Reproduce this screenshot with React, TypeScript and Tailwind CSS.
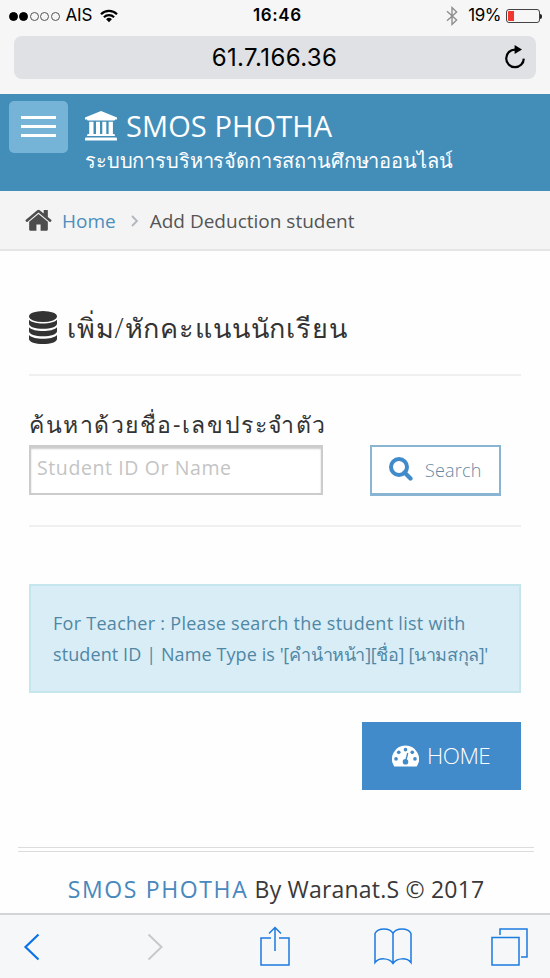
import React from 'react';

interface IconProps {
  className?: string;
}

const WifiIcon: React.FC<IconProps> = ({ className }) => (
  <svg className={className} viewBox="0 0 18 14" fill="none" stroke="#000" strokeWidth="2.2">
    <path d="M1 5.2a11.4 11.4 0 0 1 16 0" />
    <path d="M3.9 8.2a7.3 7.3 0 0 1 10.2 0" />
    <path d="M9 13.2 6.1 10.3a4.1 4.1 0 0 1 5.8 0z" fill="#000" stroke="none" />
  </svg>
);

const BluetoothIcon: React.FC<IconProps> = ({ className }) => (
  <svg className={className} viewBox="0 0 12 20" fill="none" stroke="#8e8e8e" strokeWidth="1.4">
    <path d="M1 5.3 10.6 14 6 18.4V1.6L10.6 6 1 14.7" />
  </svg>
);

const ReloadIcon: React.FC<IconProps> = ({ className }) => (
  <svg className={className} viewBox="0 0 22 24" fill="none" stroke="#000" strokeWidth="2.2">
    <path d="M11 4.6a8.8 8.8 0 1 0 8.8 9" />
    <path d="M10.6 0 18 4.6 10.6 9z" fill="#000" stroke="none" />
  </svg>
);

const InstitutionIcon: React.FC<IconProps> = ({ className }) => (
  <svg className={className} viewBox="0 0 32 30" fill="#fff">
    <path d="M16 0 32 6.5V8.6H30a1 1 0 0 1-1 1H3a1 1 0 0 1-1-1H0V6.5z" />
    <path d="M4.2 10.7h4.3v13H4.2zM11 10.7h4v13h-4zM17.3 10.7h4v13h-4zM23.6 10.7h4.3v13h-4.3z" />
    <path d="M3.2 23h25.6a1.2 1.2 0 0 1 1.1 1.1v1H2.1v-1A1.2 1.2 0 0 1 3.2 23z" />
    <path d="M1.1 26.4h29.8A1.2 1.2 0 0 1 32 27.5V29.6H0v-2.1a1.2 1.2 0 0 1 1.1-1.1z" />
  </svg>
);

const HouseIcon: React.FC<IconProps> = ({ className }) => (
  <svg className={className} viewBox="0 0 1664 1312" fill="#4d4d4d">
    <path d="M1408 768v480q0 26-19 45t-45 19H960V928H704v384H320q-26 0-45-19t-19-45V768q0-1 .5-3t.5-3l575-474 575 474q1 2 1 6zm223-69-62 74q-8 9-21 11h-3q-13 0-21-7L832 200 140 777q-12 8-24 7-13-2-21-11l-62-74q-8-10-7-23.500t11-21.500L756 55q32-26 76-26t76 26l244 204V64q0-14 9-23t23-9h192q14 0 23 9t9 23v408l219 182q10 8 11 21.500t-7 23.500z" />
  </svg>
);

const DatabaseIcon: React.FC<IconProps> = ({ className }) => (
  <svg className={className} viewBox="0 0 28 33" fill="#333">
    <ellipse cx="14" cy="5.5" rx="14" ry="5.5" />
    <path d="M0 8.7c2.500 2.600 8 3.800 14 3.800s11.500-1.200 14-3.800v4c0 3-6.300 5-14 5s-14-2-14-5z" />
    <path d="M0 16.300c2.500 2.600 8 3.800 14 3.800s11.500-1.200 14-3.800v4c0 3-6.300 5-14 5s-14-2-14-5z" />
    <path d="M0 23.900c2.500 2.600 8 3.800 14 3.800s11.500-1.200 14-3.800v4c0 3-6.300 5-14 5s-14-2-14-5z" />
  </svg>
);

const SearchIcon: React.FC<IconProps> = ({ className }) => (
  <svg className={className} viewBox="0 0 24 24" fill="none" stroke="#428bca">
    <circle cx="10" cy="10" r="8" strokeWidth="4" />
    <path d="m15.5 15.5 6 6" strokeWidth="4.2" strokeLinecap="round" />
  </svg>
);

const DashboardIcon: React.FC<IconProps> = ({ className }) => (
  <svg className={className} viewBox="0 0 28 22">
    <path d="M14 0a14 14 0 0 1 11.800 21.500q-.4.500-1 .5H3.200q-.6 0-1-.5A14 14 0 0 1 14 0z" fill="#fff" />
    <g fill="#428bca">
      <circle cx="4.2" cy="14" r="1.9" />
      <circle cx="7" cy="7.2" r="1.9" />
      <circle cx="14" cy="4.4" r="1.9" />
      <circle cx="21" cy="7.2" r="1.9" />
      <circle cx="23.8" cy="14" r="1.9" />
      <circle cx="14" cy="17" r="2.9" />
    </g>
    <path d="m14.2 16 2-7.5" stroke="#428bca" strokeWidth="1.5" strokeLinecap="round" />
  </svg>
);

const signal = [true, true, false, false, false];

const StatusBar = () => (
  <div className="flex h-[30px] items-center pt-[2px] pr-[8px] pl-[9px] font-['Inter','Liberation_Sans',sans-serif] text-black">
    <div className="flex w-[244px] items-center">
      <div className="flex gap-[1.4px]">
        {signal.map((filled, i) => (
          <span
            key={i}
            className={`h-[9px] w-[9px] rounded-full border ${filled ? 'border-black bg-black' : 'border-[#555]'}`}
          />
        ))}
      </div>
      <span className="ml-[6px] text-[17px] tracking-[-0.2px]">AIS</span>
      <WifiIcon className="ml-[8px] h-[14px] w-[18px]" />
    </div>
    <span className="text-[17px] font-semibold tracking-[0.6px]">16:46</span>
    <div className="flex flex-1 items-center justify-end">
      <BluetoothIcon className="h-[20px] w-[12px]" />
      <span className="ml-[10px] text-[17px] tracking-[-0.5px]">19%</span>
      <div className="ml-[5px] flex h-[14px] w-[34px] rounded-[3px] border border-[#444] p-[1px]">
        <div className="h-full w-[6px] rounded-l-[1px] bg-[#f2372f]" />
      </div>
      <div className="h-[5px] w-[2px] rounded-r-full bg-[#222]" />
    </div>
  </div>
);

const AddressBar = () => (
  <div className="mx-[14px] mt-[6px] flex h-[43px] items-center rounded-[8px] bg-[#e0e1e5] pr-[10px] pl-[31px]">
    <span className="flex-1 text-center font-['Inter','Liberation_Sans',sans-serif] text-[24px] tracking-[0.4px] text-black">
      61.7.166.36
    </span>
    <ReloadIcon className="mb-[1px] h-[24px] w-[22px]" />
  </div>
);

const Header = () => (
  <header className="flex h-[97px] bg-[#438eb9] pl-[9px]">
    <button className="mt-[7px] flex h-[52px] w-[59px] flex-col items-center justify-center gap-[6px] rounded-[5px] bg-[#75b3d7] pb-[2px]">
      <span className="h-[3px] w-[35px] bg-white" />
      <span className="h-[3px] w-[35px] bg-white" />
      <span className="h-[3px] w-[35px] bg-white" />
    </button>
    <div className="ml-[17px] pt-[11px] text-white">
      <div className="flex h-[42px] items-center">
        <InstitutionIcon className="h-[30px] w-[32px]" />
        <span className="ml-[9px] text-[29px] tracking-[0.1px] whitespace-nowrap">SMOS PHOTHA</span>
      </div>
      <div className="h-[30px] text-[20px] leading-[28px] font-light tracking-[-0.15px] whitespace-nowrap">
        ระบบการบริหารจัดการสถานศึกษาออนไลน์
      </div>
    </div>
  </header>
);

const Breadcrumb = () => (
  <nav className="flex h-[60px] items-center border-b-2 border-[#e5e5e5] bg-[#f4f4f4] pt-[2px] pl-[25px] text-[19px]">
    <HouseIcon className="mb-[2px] h-[22px] w-[27px]" />
    <a className="ml-[10px] text-[#4c8fbd]">Home</a>
    <svg className="ml-[15px] h-[12px] w-[8px]" viewBox="0 0 8 12" fill="none" stroke="#b2b6bf" strokeWidth="1.8">
      <path d="m1 1 5 5-5 5" />
    </svg>
    <span className="ml-[11px] text-[#555]">Add Deduction student</span>
  </nav>
);

const Toolbar = () => (
  <div className="flex h-[65px] items-center border-t-2 border-[#d3d4d6] bg-[#f6f7f8] pl-[23px]">
    <svg className="h-[28px] w-[18px]" viewBox="0 0 18 28" fill="none" stroke="#0b72e7" strokeWidth="2.2">
      <path d="M15.5 1.5 2.5 14l13 12.5" />
    </svg>
    <svg className="ml-[105px] h-[28px] w-[18px]" viewBox="0 0 18 28" fill="none" stroke="#c8c9cb" strokeWidth="2">
      <path d="M2.5 1.5 15.5 14l-13 12.5" />
    </svg>
    <svg className="mb-[2px] ml-[96px] h-[40px] w-[30px]" viewBox="0 0 30 40" fill="none" stroke="#1b7be0" strokeWidth="1.5">
      <path d="M11 12H1v27h28V12H19M15 25V1.5M9 7.5l6-6 6 6" />
    </svg>
    <svg className="ml-[84px] h-[38px] w-[38px]" viewBox="0 0 38 38" fill="none" stroke="#1b7be0" strokeWidth="1.5">
      <path d="M19 5.5V36M19 5.5C16-.5 4-.5 1 5.5V34.5c4-5 14-5 18 1 4-6 14-6 18-1V5.5C34-.5 22-.5 19 5.5" />
    </svg>
    <svg className="ml-[79px] h-[38px] w-[37px]" viewBox="0 0 37 38" fill="none" stroke="#1b7be0" strokeWidth="1.5">
      <path d="M1 9.5h27v27.5H1zM9 7V1h27v28h-6" />
    </svg>
  </div>
);

const App: React.FC = () => {
  return (
    <div className="flex h-[978px] w-[550px] flex-col overflow-hidden bg-[#fefefe] font-['Open_Sans','Noto_Sans',sans-serif]">
      <div className="h-[94px] shrink-0 bg-[#f6f6f6]">
        <StatusBar />
        <AddressBar />
      </div>
      <Header />
      <Breadcrumb />

      <main className="flex-1 px-[29px]">
        <h1 className="flex h-[125px] items-center border-b-2 border-[#f0f0f0] pt-[30px] text-[27px] font-light text-[#333]">
          <DatabaseIcon className="h-[33px] w-[28px]" />
          <span className="mt-[2px] ml-[10px] tracking-[0.85px] whitespace-nowrap">เพิ่ม/หักคะแนนนักเรียน</span>
        </h1>

        {/* Search form */}
        <div className="flex h-[151px] border-b-2 border-[#f0f0f0]">
          <div className="w-[294px] pt-[30px]">
            <label className="block h-[39px] text-[23px] leading-[36px] tracking-[1.55px] whitespace-nowrap text-[#333]">
              ค้นหาด้วยชื่อ-เลขประจำตัว
            </label>
            <input
              type="text"
              placeholder="Student ID Or Name"
              className="block h-[50px] w-[294px] border-2 border-[#ccc] bg-white px-[6px] pb-[6px] text-[19.5px] tracking-[0.6px] shadow-[inset_0_2px_2px_#ccc] outline-none placeholder:text-[#c4c4c4]"
            />
          </div>
          <button className="mt-[69px] ml-[47px] flex h-[51px] w-[131px] items-center border-2 border-b-[3px] border-[#8ab5d2] bg-white pl-[17px] text-[18px] font-light text-[#6688a6]">
            <SearchIcon className="mb-[2px] h-[24px] w-[24px]" />
            <span className="ml-[12px] tracking-[0.2px]">Search</span>
          </button>
        </div>

        <div className="mt-[57px] h-[109px] border-2 border-[#c4e6ec] bg-[#d9edf7] px-[22px] pt-[22px] text-[18px] leading-[31px] whitespace-nowrap text-[#4f87a5]">
          <p className="tracking-[0.28px]">For Teacher : Please search the student list with</p>
          <p>
            <span className="tracking-[0.1px]">student ID | Name Type is </span>
            <span className="tracking-[-0.35px]">'[คำนำหน้า][ชื่อ] [นามสกุล]'</span>
          </p>
        </div>

        <div className="mt-[29px] flex justify-end">
          <button className="flex h-[68px] w-[159px] items-center bg-[#428bca] pl-[30px] text-[22.5px] font-light text-white">
            <DashboardIcon className="h-[22px] w-[27px]" />
            <span className="mb-[1px] ml-[8px] tracking-[-0.5px]">HOME</span>
          </button>
        </div>
      </main>

      <footer className="mr-[16px] ml-[18px] h-[66px] text-center text-[23px] leading-[34px] whitespace-nowrap text-[#393939]">
        <div className="mb-[20px] h-[5px] border-y border-[#dcdcdc]" />
        <span className="font-medium tracking-[1.65px] text-[#4788bd]">SMOS PHOTHA</span>
        <span className="tracking-[0.2px]"> By Waranat.S © 2017</span>
      </footer>
      <Toolbar />
    </div>
  );
};

export default App;
